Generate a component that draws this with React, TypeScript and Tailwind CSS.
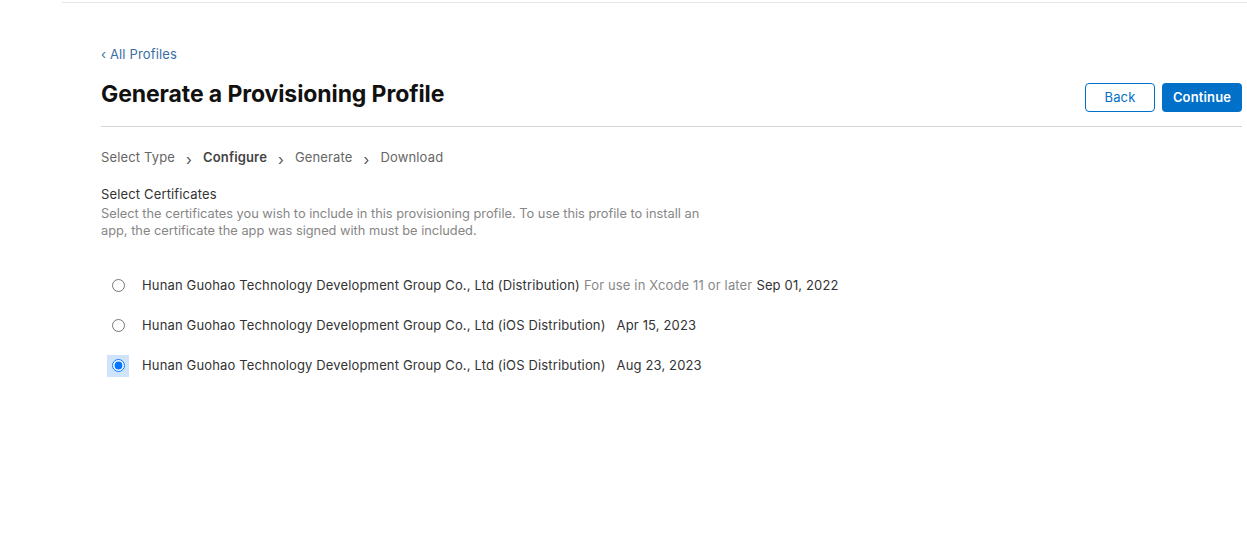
import { useState } from 'react';

const certificates = [
  {
    id: 'c1',
    name: 'Hunan Guohao Technology Development Group Co., Ltd (Distribution)',
    note: 'For use in Xcode 11 or later',
    date: 'Sep 01, 2022',
  },
  {
    id: 'c2',
    name: 'Hunan Guohao Technology Development Group Co., Ltd (iOS Distribution)',
    note: '',
    date: 'Apr 15, 2023',
  },
  {
    id: 'c3',
    name: 'Hunan Guohao Technology Development Group Co., Ltd (iOS Distribution)',
    note: '',
    date: 'Aug 23, 2023',
  },
];

const steps = ['Select Type', 'Configure', 'Generate', 'Download'];

export default function App() {
  const [selected, setSelected] = useState('c3');

  return (
    <main className="min-h-[549px] w-full bg-white font-['Inter',sans-serif] tracking-[0.15px] text-[#333]">
      {/* ligne du haut */}
      <div className="ml-[62px] pt-[2px]">
        <div className="h-px bg-[#e5e5e5]"></div>
      </div>

      <div className="pl-[101px] pr-[5px] pt-[38px]">
        <a href="#" className="text-[13px] leading-[17px] text-[#3a6ea5]">
          ‹ All Profiles
        </a>

        <div className="mt-[12px] flex items-start justify-between border-b border-[#d6d6d6] pb-[14px]">
          <h1 className="pt-[2px] text-[23px] font-bold leading-[30px] tracking-[-0.1px] text-[#111]">
            Generate a Provisioning Profile
          </h1>
          <div className="mt-[6px] flex gap-[7px]">
            <button className="h-[29px] w-[70px] rounded-[4px] border border-[#0070c9] text-[13px] text-[#0070c9]">
              Back
            </button>
            <button className="h-[29px] w-[80px] rounded-[4px] bg-[#0070c9] text-[13px] font-semibold text-white">
              Continue
            </button>
          </div>
        </div>

        {/* étapes */}
        <div className="mt-[21px] flex items-center text-[13px] text-[#666]">
          {steps.map((s, i) => (
            <div key={s} className="flex items-center">
              {i > 0 && <span className="mx-[11px] mt-[3px] text-[15px] leading-none text-[#555]">›</span>}
              <span className={s === 'Configure' ? 'font-semibold text-[#444]' : ''}>{s}</span>
            </div>
          ))}
        </div>

        <div className="mt-[18px]">
          <div className="text-[13px] leading-[17px] text-[#333]">Select Certificates</div>
          <p className="mt-[2px] w-[620px] text-[12.8px] leading-[17px] tracking-normal text-[#868686]">
            Select the certificates you wish to include in this provisioning profile. To use this profile to install an
            app, the certificate the app was signed with must be included.
          </p>
        </div>

        <div className="mt-[36px] flex flex-col gap-[18px]">
          {certificates.map((c) => (
            <label key={c.id} className="flex h-[22px] items-center text-[13px] text-[#333]">
              <span
                className={
                  'ml-[6px] flex h-[22px] w-[22px] items-center justify-center ' +
                  (selected === c.id ? 'bg-[#cfe3fb]' : '')
                }
              >
                <input
                  type="radio"
                  name="cert"
                  checked={selected === c.id}
                  onChange={() => setSelected(c.id)}
                  className="m-0 h-[13px] w-[13px] accent-[#0075ff]"
                />
              </span>
              <span className="ml-[13px]">{c.name}</span>
              {c.note ? (
                <>
                  <span className="ml-[4px] text-[#888]">{c.note}</span>
                  <span className="ml-[4px]">{c.date}</span>
                </>
              ) : (
                <span className="ml-[11px]">{c.date}</span>
              )}
            </label>
          ))}
        </div>
      </div>
    </main>
  );
}
